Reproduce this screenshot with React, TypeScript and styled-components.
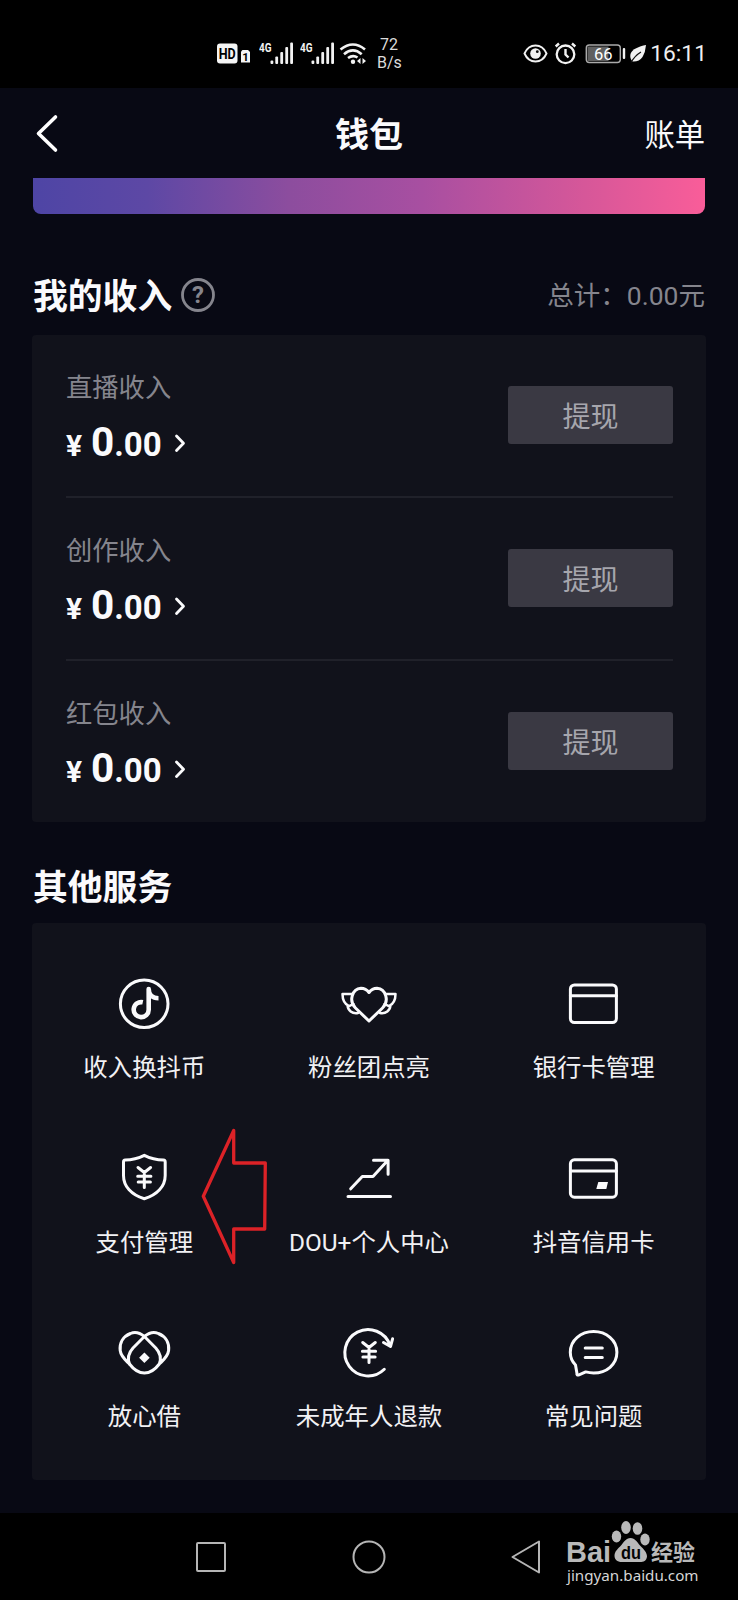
import React from 'react';
import styled, { createGlobalStyle } from 'styled-components';

const GlobalStyle = createGlobalStyle`
  * { box-sizing: border-box; }
  body { margin: 0; background: #000; }
`;

const Screen = styled.div`
  width: 738px;
  height: 1600px;
  display: flex;
  flex-direction: column;
  background: #080914;
  color: #fafafc;
  font-family: Roboto, 'Noto Sans CJK SC', sans-serif;
  overflow: hidden;
`;

const StatusBar = styled.div`
  height: 88px;
  flex: none;
  display: flex;
  align-items: center;
  justify-content: space-between;
  padding: 20px 31px 0 217px;
  background: #000;
`;

const StatusGroup = styled.div`
  display: flex;
  align-items: center;
`;

const NetSpeed = styled.div`
  margin-left: 6px;
  width: 24px;
  font-size: 16px;
  line-height: 18.5px;
  text-align: center;
  color: #dcdcdc;
`;

const Clock = styled.div`
  margin-left: 3px;
  font-size: 22.8px;
  line-height: 24px;
  color: #f0f0f0;
`;

const Header = styled.header`
  height: 90px;
  flex: none;
  display: grid;
  grid-template-columns: 1fr auto 1fr;
  align-items: center;
  padding: 0 33px;
`;

const Title = styled.h1`
  margin: 4px 0 0;
  font-size: 34px;
  line-height: 40px;
  font-weight: 700;
`;

const BillLink = styled.div`
  justify-self: end;
  padding-top: 5px;
  font-size: 30.3px;
  line-height: 36px;
`;

const Banner = styled.div`
  height: 36px;
  flex: none;
  margin: 0 33px;
  border-radius: 0 0 8px 8px;
  background: linear-gradient(90deg, #4e45a5 0%, #5d48a5 17%, #8c4d9e 38%, #a84fa1 58%, #d65799 82%, #f95d99 100%);
`;

const SectionHead = styled.div<{ $height: number; $top: number }>`
  height: ${(p) => p.$height}px;
  flex: none;
  padding: ${(p) => p.$top}px 33px 0 33px;
  display: flex;
  align-items: flex-start;
`;

const SectionTitle = styled.h2`
  margin: 1px 0 0;
  font-size: 34.8px;
  line-height: 40px;
  font-weight: 700;
`;

const HelpIcon = styled.svg`
  margin: 1px 0 0 8px;
`;

const Total = styled.div`
  margin-left: auto;
  font-size: 26.5px;
  line-height: 40px;
  color: #85858d;
`;

const Card = styled.section<{ $height: number }>`
  height: ${(p) => p.$height}px;
  flex: none;
  margin: 0 32px;
  background: #11121b;
  border-radius: 4px;
`;

const IncomeRow = styled.div`
  height: 163px;
  margin: 0 33px 0 34px;
  display: flex;
  align-items: flex-start;
  justify-content: space-between;
  &:first-child { height: 161px; }
  & + & { border-top: 2px solid #20212a; }
`;

const IncomeInfo = styled.div`
  padding-top: 35px;
`;

const IncomeLabel = styled.div`
  font-size: 26.3px;
  line-height: 36px;
  color: #85858d;
`;

const Amount = styled.div`
  height: 48px;
  margin-top: 12px;
  display: flex;
  align-items: baseline;
  font-weight: 700;
  font-size: 33px;
  line-height: 48px;
`;

const Yen = styled.span`
  font-size: 30px;
  width: 25px;
`;

const Whole = styled.span`
  font-size: 40.5px;
`;

const WithdrawButton = styled.button`
  margin-top: 51px;
  width: 165px;
  height: 58px;
  border: 0;
  padding: 5px 0 0;
  border-radius: 3px;
  background: #3a3943;
  color: #a6a6ad;
  font: 400 28px/53px Roboto, 'Noto Sans CJK SC', sans-serif;
`;

const ServiceGrid = styled.div`
  display: grid;
  grid-template-columns: repeat(3, 1fr);
  grid-auto-rows: 174.6px;
  padding-top: 53px;
`;

const Service = styled.div`
  display: flex;
  flex-direction: column;
  align-items: center;
`;

const ServiceIcon = styled.svg`
  width: 56px;
  height: 56px;
  fill: none;
  stroke: #fafafc;
  stroke-width: 3;
  stroke-linecap: round;
  stroke-linejoin: round;
  overflow: visible;
`;

const ServiceLabel = styled.div`
  margin-top: 20px;
  font-size: 24.4px;
  line-height: 32px;
  white-space: nowrap;
  color: #f1f1f4;
`;

const Pointer = styled.svg`
  position: absolute;
  left: 198px;
  top: 1124px;
`;

const NavBar = styled.nav`
  height: 87px;
  flex: none;
  margin-top: auto;
  background: #000;
  display: flex;
  align-items: center;
  padding-left: 195px;
  gap: 124px;
`;

const Watermark = styled.div`
  position: absolute;
  left: 566px;
  top: 1518px;
  width: 134px;
  color: #b9b9b9;
`;

const Brand = styled.svg`
  display: block;
`;

const Url = styled.div`
  padding: 1px 0 0 1px;
  font: 400 15.2px/16px 'Noto Sans', sans-serif;
  color: #d6d6d6;
  white-space: nowrap;
`;

const Signal = () => (
  <svg width="36" height="24" viewBox="0 0 36 24" fill="#f2f2f2">
    <text x="0" y="10" fontSize="12.5" fontWeight="700" fontFamily="Roboto, sans-serif" textLength="12.5" lengthAdjust="spacingAndGlyphs">4G</text>
    <rect x="11.5" y="18.5" width="2.8" height="3.6" rx="1" />
    <rect x="16.3" y="14.5" width="2.8" height="7.6" rx="1" />
    <rect x="21.3" y="10" width="2.8" height="12" rx="1" />
    <rect x="26.3" y="5" width="2.8" height="17" rx="1" />
    <rect x="31.2" y="0.5" width="2.8" height="21.6" rx="1" />
  </svg>
);

const YenMark = ({ x, y }: { x: number; y: number }) => (
  <path transform={`translate(${x} ${y})`} d="M-6.3-9.5 0-4.5 6.3-9.5M0-4V10.5M-6.6-.8H6.6M-6.1 5H6.1" />
);

const services: { label: string; icon: React.ReactNode }[] = [
  {
    label: '收入换抖币',
    icon: (
      <>
        <circle cx="28.2" cy="27.8" r="23.8" />
        <path
          d="M26.8 26.3A7.500 7.500 0 1 0 32.700 33.500V13C32.700 18.500 36.500 22.300 42.500 22.300"
          strokeWidth="4.600"
          strokeLinecap="butt"
        />
      </>
    ),
  },
  {
    label: '粉丝团点亮',
    icon: (
      <>
        <path d="M28 45 14.5 32C7.5 25 11 13 20 12.3c3.5 0 6 1.5 8 4.2 2-2.7 4.5-4.2 8-4.2C45 13 48.500 25 41.500 32z" />
        <path d="M11.300 18H1.500c0 5.500 2 10 6.500 12.200L12.500 28M6.500 29.500c.5 5 4.500 8.500 10.500 7.500M44.700 18H54.500c0 5.500-2 10-6.500 12.200L43.500 28M49.500 29.500c-.5 5-4.500 8.500-10.500 7.500" strokeWidth="2.5" />
      </>
    ),
  },
  {
    label: '银行卡管理',
    icon: (
      <>
        <rect x="4.400" y="9" width="46" height="37.500" rx="4" />
        <path d="M4.400 19.700H50.400" />
      </>
    ),
  },
  {
    label: '支付管理',
    icon: (
      <>
        <path d="M28.300 4.300C22 7.500 16 8.900 9.200 8.900q-1.700 0-1.700 2V24.500c0 11 8 19.500 20.800 23.300C41 44 49.200 35.500 49.200 24.500V10.900q0-2-1.700-2C40.500 8.900 34.500 7.500 28.300 4.300z" />
        <YenMark x={28.3} y={26} />
      </>
    ),
  },
  {
    label: 'DOU+个人中心',
    icon: (
      <path d="M7 45.600H49.500M9.700 37.800 21.300 25.500H32L46.200 10M32.500 9.200H47.100V23.200" />
    ),
  },
  {
    label: '抖音信用卡',
    icon: (
      <>
        <rect x="4.400" y="8.800" width="46" height="37.400" rx="4" />
        <path d="M4.400 20H50.400" />
        <path d="M32.300 31H42L40.300 38H30.300z" fill="#fafafc" stroke="none" />
      </>
    ),
  },
  {
    label: '放心借',
    icon: (
      <>
        <path d="M28.400 11.500C23.500 7.500 19 6.500 14.500 8.500 7 11.500 3.300 18 4.200 25.500 4.900 31.500 9 34.500 13.500 39" />
        <path d="M28.400 11.500C33.300 7.500 37.800 6.500 42.300 8.500 49.800 11.500 53.500 18 52.600 25.500 51.900 31.500 47.800 34.500 43.300 39 38 46 34 48 28.400 48 22.800 48 18.800 46 13.500 39 11.500 34 12.500 28 17 23L28.400 11.500 39.800 23C44.300 28 45.300 34 43.300 39" />
        <path d="M28.400 27.400 33.700 32.700 28.400 38 23.100 32.700z" fill="#fafafc" stroke="none" />
      </>
    ),
  },
  {
    label: '未成年人退款',
    icon: (
      <>
        <path d="M43.300 44.300A23.200 23.200 0 1 1 49 20.300M42.500 17.500 49.500 21.500 51.600 13.800" />
        <YenMark x={28} y={27} />
      </>
    ),
  },
  {
    label: '常见问题',
    icon: (
      <>
        <path d="M9.500 40C6 36.500 4.300 32 4.300 27.300 4.300 15 15 6.600 27.600 6.600S50.900 15 50.900 27.300 40.500 48 27.600 48C24.500 48 22 47.500 19.700 46.900L13 49.800Q10.500 50.700 10.900 48z" />
        <path d="M19.200 23H36.300M19.200 32.400H36.300" />
      </>
    ),
  },
];

const incomes = ['直播收入', '创作收入', '红包收入'];

export default function App() {
  return (
    <Screen>
      <GlobalStyle />
      <StatusBar>
        <StatusGroup>
          <svg width="42" height="24" viewBox="0 0 42 24">
            <rect x="0" y="1.500" width="20.500" height="20" rx="3" fill="#f5f5f5" />
            <text x="1.700" y="16.500" fontSize="14" fontWeight="700" fontFamily="Roboto, sans-serif" textLength="17" lengthAdjust="spacingAndGlyphs">HD</text>
            <path d="M25.500 8H31L33 10V20.500H24V9.500z" fill="#f5f5f5" />
            <text x="25.200" y="18.500" fontSize="11.500" fontWeight="700" fontFamily="Roboto, sans-serif">1</text>
          </svg>
          <Signal />
          <svg width="5" height="24" />
          <Signal />
          <svg width="35" height="24" viewBox="0 0 35 24" fill="none" stroke="#f2f2f2" strokeWidth="2.600">
            <path d="M4.500 7.500Q17-2.500 29 7.500M8 12.200Q17 4.500 25.700 12.200M12 16Q17 12.500 21.500 15.500" />
            <circle cx="17" cy="19.700" r="2.200" fill="#f2f2f2" stroke="none" />
            <path d="M24.500 16V22L21 19zM26.500 16V22L30 19z" fill="#f2f2f2" stroke="none" />
          </svg>
          <NetSpeed>72<br />B/s</NetSpeed>
        </StatusGroup>
        <StatusGroup>
          <svg width="124" height="24" viewBox="0 0 124 24" fill="none" stroke="#f2f2f2" strokeWidth="1.900">
            <path d="M1.500 11.500Q5 3.500 12.500 3.500T23.500 11.500Q20 19.500 12.500 19.500T1.500 11.500z" />
            <circle cx="12.500" cy="11.500" r="5.300" fill="#f2f2f2" stroke="none" />
            <circle cx="14.300" cy="9.700" r="1.400" fill="#111" stroke="none" />
            <circle cx="42.500" cy="12.300" r="8.800" strokeWidth="2.300" />
            <path d="M42.500 7V12.500L45.500 15.500M32.700 4.500 36 1.500M52.300 4.500 49 1.500" strokeWidth="2.400" />
            <rect x="63.300" y="3" width="34" height="17.500" rx="3" strokeWidth="1.400" stroke="#aaa" />
            <rect x="64.500" y="4.500" width="21" height="14.500" fill="#606060" stroke="none" />
            <text x="71" y="17.700" fontSize="16.500" fill="#fff" stroke="none" fontFamily="Roboto, sans-serif">66</text>
            <rect x="99.800" y="6" width="2.400" height="11" rx="1" fill="#f2f2f2" stroke="none" />
            <path d="M123 3C116 4.500 109 7 107.500 12Q106.500 16 109.500 19.500 116 20 119.500 15 122.500 10 123 3z" fill="#f2f2f2" stroke="none" />
            <path d="M108 20.500Q112 13.500 118 10" stroke="#111" strokeWidth="1.200" />
          </svg>
          <Clock>16:11</Clock>
        </StatusGroup>
      </StatusBar>

      <Header>
        <svg width="30" height="40" viewBox="0 0 30 40" fill="none" stroke="#fff" strokeWidth="3.600" strokeLinecap="round" strokeLinejoin="round">
          <path d="M22.500 4 5.500 20.500 22.500 37" />
        </svg>
        <Title>钱包</Title>
        <BillLink>账单</BillLink>
      </Header>
      <Banner />

      <SectionHead $height={121} $top={62}>
        <SectionTitle>我的收入</SectionTitle>
        <HelpIcon width="36" height="36" viewBox="0 0 36 36">
          <circle cx="18" cy="18" r="15.500" fill="none" stroke="#85858d" strokeWidth="2.800" />
          <text x="18" y="26.300" textAnchor="middle" fontSize="24" fontWeight="700" fill="#85858d" fontFamily="Roboto, sans-serif">?</text>
        </HelpIcon>
        <Total>总计：0.00元</Total>
      </SectionHead>

      <Card $height={487}>
        {incomes.map((label) => (
          <IncomeRow key={label}>
            <IncomeInfo>
              <IncomeLabel>{label}</IncomeLabel>
              <Amount>
                <Yen>¥</Yen>
                <Whole>0</Whole>.00
                <svg width="36" height="22" viewBox="0 0 36 22" fill="none" stroke="#fafafc" strokeWidth="2.800" strokeLinecap="round" strokeLinejoin="round">
                  <path d="M14.500 2 21.500 9.300 14.500 16.500" />
                </svg>
              </Amount>
            </IncomeInfo>
            <WithdrawButton>提现</WithdrawButton>
          </IncomeRow>
        ))}
      </Card>

      <SectionHead $height={101} $top={45}>
        <SectionTitle>其他服务</SectionTitle>
      </SectionHead>

      <Card $height={557}>
        <ServiceGrid>
          {services.map((s) => (
            <Service key={s.label}>
              <ServiceIcon viewBox="0 0 56 56">{s.icon}</ServiceIcon>
              <ServiceLabel>{s.label}</ServiceLabel>
            </Service>
          ))}
        </ServiceGrid>
      </Card>

      <Pointer width="74" height="146" viewBox="198 1124 74 146" fill="none" stroke="#dc2227" strokeWidth="3.300" strokeLinejoin="round">
        <path d="M233.700 1130.500V1163H265.300L264.700 1229H233.700V1262.500L203.300 1196.300z" />
      </Pointer>

      <NavBar>
        <svg width="32" height="32" viewBox="0 0 32 32" fill="none" stroke="#b5b5b5" strokeWidth="2">
          <rect x="2" y="2" width="28" height="28" rx="1" />
        </svg>
        <svg width="36" height="36" viewBox="0 0 36 36" fill="none" stroke="#b5b5b5" strokeWidth="2">
          <circle cx="18" cy="18" r="15.500" />
        </svg>
        <svg width="32" height="36" viewBox="0 0 32 36" fill="none" stroke="#b5b5b5" strokeWidth="2" strokeLinejoin="round">
          <path d="M28 2.500V33.500L1.500 18z" />
        </svg>
      </NavBar>

      <Watermark>
        <Brand width="134" height="48" viewBox="0 0 134 48" fill="#b9b9b9">
          <text x="0" y="43.500" fontSize="29" fontWeight="700" fontFamily="'Liberation Sans', sans-serif" textLength="45" lengthAdjust="spacingAndGlyphs">Bai</text>
          <ellipse cx="50.500" cy="18.500" rx="4.700" ry="6" />
          <ellipse cx="60" cy="9.500" rx="4.800" ry="6.500" />
          <ellipse cx="71.500" cy="10.500" rx="4.800" ry="6.300" />
          <ellipse cx="79" cy="21.500" rx="4.700" ry="6" />
          <path d="M64.500 20C69 20 71 24 74 27.500 78 31.500 81 34.500 81 38.500 80.500 43 77.500 44 74 44H56C51 44 48.500 41.500 48.500 37.500 48.500 33.500 52 30.500 55 27.500 58 24 60 20 64.500 20z" />
          <text x="55" y="40.500" fontSize="19" fontWeight="700" fill="#050505" fontFamily="'Liberation Sans', sans-serif" textLength="20" lengthAdjust="spacingAndGlyphs">du</text>
          <text x="85" y="41.500" fontSize="22" fontWeight="700" fontFamily="'Noto Sans CJK SC', sans-serif">经验</text>
        </Brand>
        <Url>jingyan.baidu.com</Url>
      </Watermark>
    </Screen>
  );
}
